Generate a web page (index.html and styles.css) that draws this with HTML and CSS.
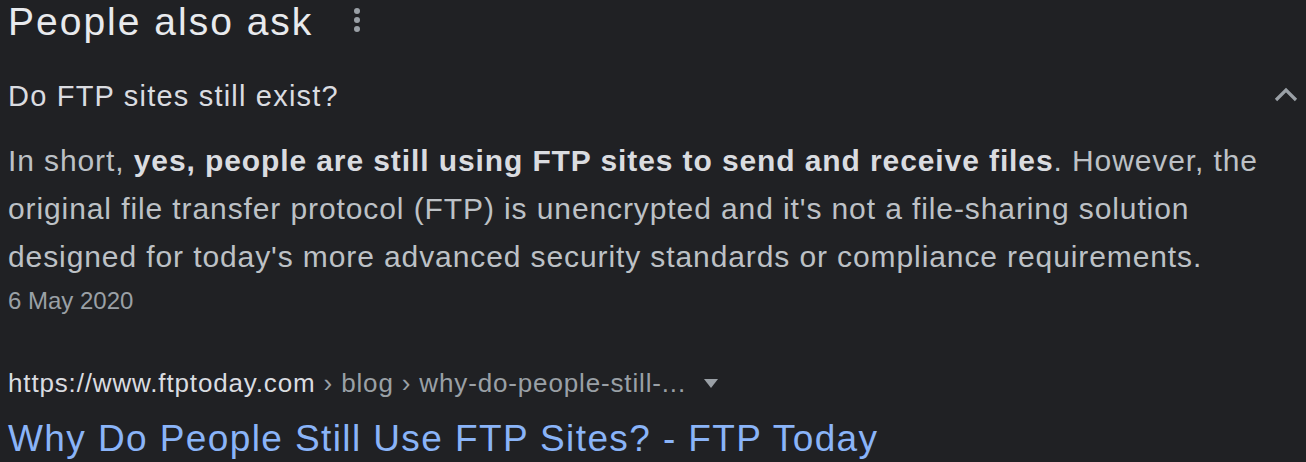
FILE: index.html
```html
<!DOCTYPE html>
<html lang="en">
<head>
  <meta charset="UTF-8">
  <meta name="viewport" content="width=device-width, initial-scale=1.0">
  <title>People also ask</title>
  <link rel="stylesheet" href="styles.css">
</head>
<body>
  <div class="paa">
    <div class="paa-header">
      <h2 class="paa-title">People also ask</h2>
      <span class="kebab">
        <span class="dot"></span>
        <span class="dot"></span>
        <span class="dot"></span>
      </span>
    </div>

    <div class="question">
      <span class="question-text">Do FTP sites still exist?</span>
      <svg class="chevron" width="24" height="16" viewBox="0 0 24 16">
        <path d="M2 14 L12 4 L22 14" fill="none" stroke="#9aa0a6" stroke-width="3.2"/>
      </svg>
    </div>

    <div class="answer">
      <p class="snippet">In short, <b>yes, people are still using FTP sites to send and receive files</b>. However, the original file transfer protocol (FTP) is unencrypted and it's not a file-sharing solution designed for today's more advanced security standards or compliance requirements.</p>
      <div class="date">6 May 2020</div>
    </div>

    <div class="result">
      <div class="cite">
        <span class="domain">https://www.ftptoday.com</span><span class="crumbs"> › blog › why-do-people-still-...</span>
        <span class="caret"></span>
      </div>
      <a class="result-link" href="#">Why Do People Still Use FTP Sites? - FTP Today</a>
    </div>
  </div>
</body>
</html>
```

FILE: styles.css
```css
body {
  margin: 0;
  background-color: #202124;
  font-family: "Liberation Sans", Arial, sans-serif;
  overflow: hidden;
}

.paa {
  padding: 0 8px;
}

.paa-header {
  display: flex;
  align-items: center;
  gap: 41px;
  height: 44px;
}

.paa-title {
  margin: 0;
  font-weight: normal;
  font-size: 39px;
  color: #e8eaed;
  letter-spacing: 2px;
}

.kebab {
  display: flex;
  flex-direction: column;
  gap: 3px;
  margin-top: -4px;
}

.dot {
  width: 6px;
  height: 6px;
  border-radius: 50%;
  background: #9aa0a6;
}

.question {
  display: flex;
  justify-content: space-between;
  align-items: flex-start;
  box-sizing: border-box;
  height: 93px;
  padding-top: 34px;
}

.question-text {
  font-size: 29px;
  line-height: 36px;
  letter-spacing: 1.2px;
  color: #dadce0;
}

.chevron {
  margin-top: 8px;
}

.snippet {
  margin: 0;
  font-size: 30px;
  line-height: 48px;
  letter-spacing: 0.9px;
  color: #bdc1c6;
}

.snippet b {
  color: #dadce0;
}

.date {
  font-size: 24px;
  color: #9aa0a6;
  line-height: 40px;
}

.result {
  margin-top: 44px;
}

.cite {
  display: flex;
  align-items: center;
  font-size: 26px;
  line-height: 36px;
  letter-spacing: 0.85px;
}

.domain {
  color: #dadce0;
}

.crumbs {
  color: #9aa0a6;
  white-space: pre;
}

.caret {
  margin-left: 18px;
  width: 0;
  height: 0;
  border-left: 7px solid transparent;
  border-right: 7px solid transparent;
  border-top: 9px solid #9aa0a6;
}

.result-link {
  display: block;
  margin-top: 8px;
  font-size: 37px;
  line-height: 60px;
  letter-spacing: 1.4px;
  color: #8ab4f8;
  text-decoration: none;
}
```
